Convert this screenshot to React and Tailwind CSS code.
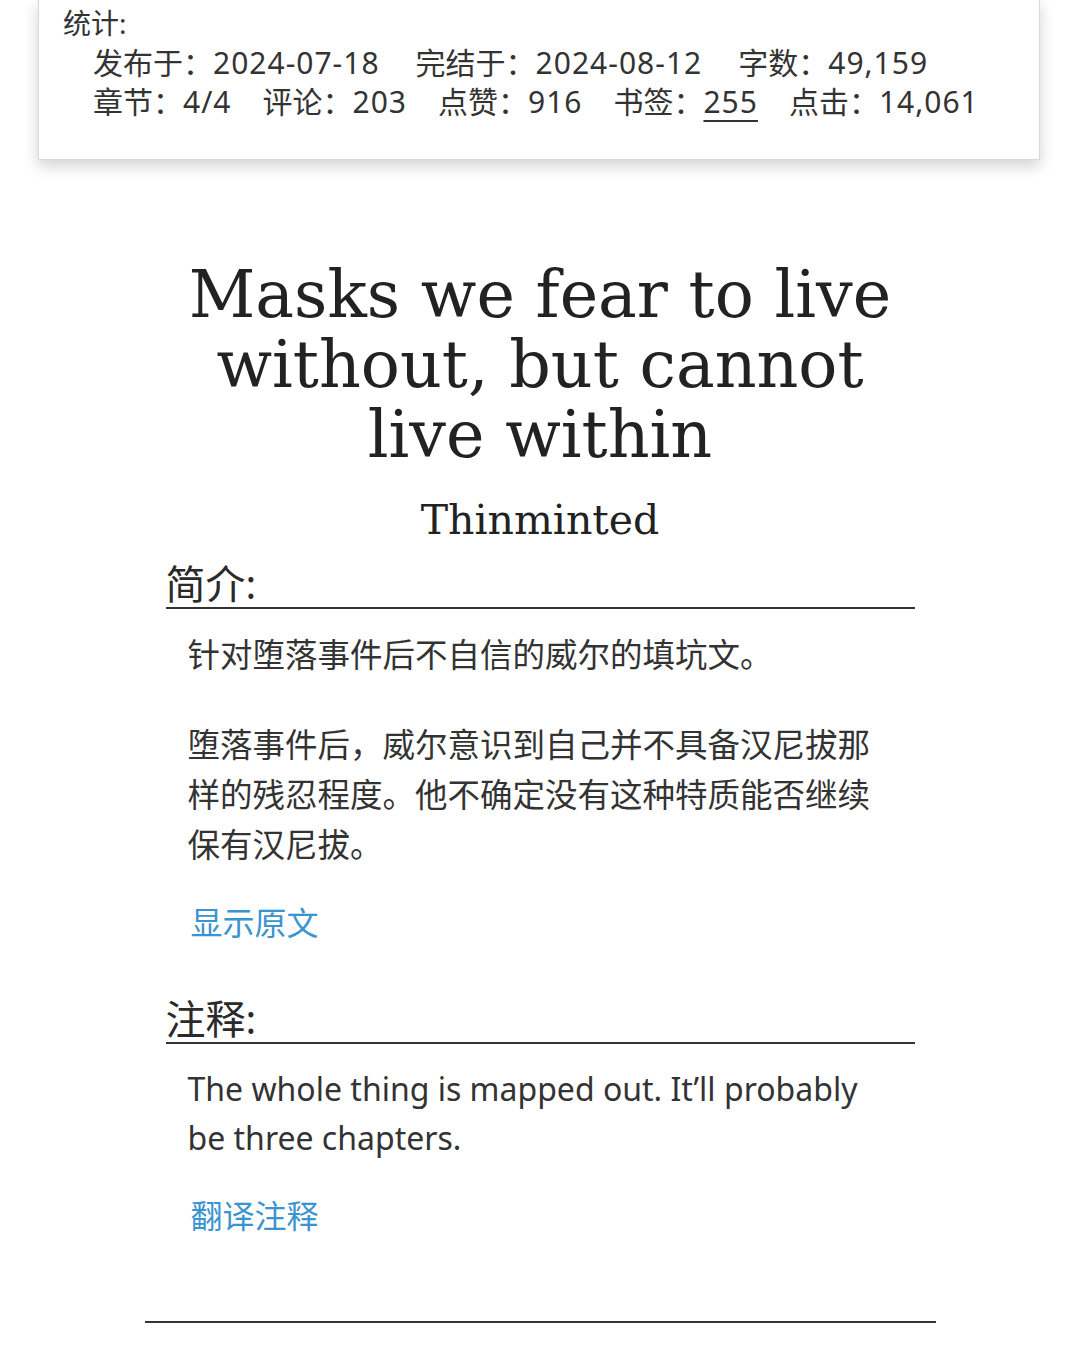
import React from "react";

const cjk = { fontFamily: '"Noto Sans", "Noto Sans CJK SC", sans-serif' };
const serif = { fontFamily: '"DejaVu Serif", "Noto Sans CJK SC", serif' };

function Stat({ label, value, underline }) {
  return (
    <span className="whitespace-nowrap">
      {label}：
      <span className={"tracking-[1px] " + (underline ? "underline decoration-2 underline-offset-[7px]" : "")}>{value}</span>
    </span>
  );
}

export default function App() {
  return (
    <div className="min-h-[1347px] w-[1080px] bg-white text-[#333]" style={cjk}>
      <div className="ml-[38px] w-[1002px] border-x border-b border-[#d9d9d9] bg-white pl-[24px] pb-[38px] shadow-[0_6px_14px_rgba(0,0,0,0.18)]">
        <div className="text-[28px] leading-[40px] pt-[3px]">统计:</div>
        <div className="pl-[30px] text-[30px] leading-[39px]">
          <div className="flex gap-[36px]">
            <Stat label="发布于" value="2024-07-18" />
            <Stat label="完结于" value="2024-08-12" />
            <Stat label="字数" value="49,159" />
          </div>
          <div className="flex gap-[31px]">
            <Stat label="章节" value="4/4" />
            <Stat label="评论" value="203" />
            <Stat label="点赞" value="916" />
            <Stat label="书签" value="255" underline />
            <Stat label="点击" value="14,061" />
          </div>
        </div>
      </div>

      <h1 className="mt-[100px] text-center text-[65px] leading-[70px] text-[#222] px-[180px]" style={serif}>
        Masks we fear to live without, but cannot live within
      </h1>
      <div className="mt-[25px] text-center text-[41px] leading-[50px] text-[#222]" style={serif}>
        Thinminted
      </div>

      <div className="mx-auto w-[749px]">
        <div className="mt-[15px] border-b-2 border-[#333] text-[40px] leading-[47px] text-[#2a2a2a]">简介:</div>
        <div className="px-[22px] text-[32.5px] leading-[50px]">
          <p className="mt-[21px]">针对堕落事件后不自信的威尔的填坑文。</p>
          <p className="mt-[40px]">堕落事件后，威尔意识到自己并不具备汉尼拔那样的残忍程度。他不确定没有这种特质能否继续保有汉尼拔。</p>
          <div className="mt-[28px] pl-[3px] text-[32px] text-[#3a94d0]">显示原文</div>
        </div>

        <div className="mt-[47px] border-b-2 border-[#333] text-[40px] leading-[47px] text-[#2a2a2a]">注释:</div>
        <div className="px-[22px]">
          <p className="mt-[20px] text-[32px] leading-[49px]">The whole thing is mapped out. It’ll probably be three chapters.</p>
          <div className="mt-[29px] pl-[3px] text-[32px] leading-[50px] text-[#3a94d0]">翻译注释</div>
        </div>
      </div>

      <div className="mx-auto mt-[80px] w-[791px] border-b-2 border-[#333]"></div>
    </div>
  );
}
